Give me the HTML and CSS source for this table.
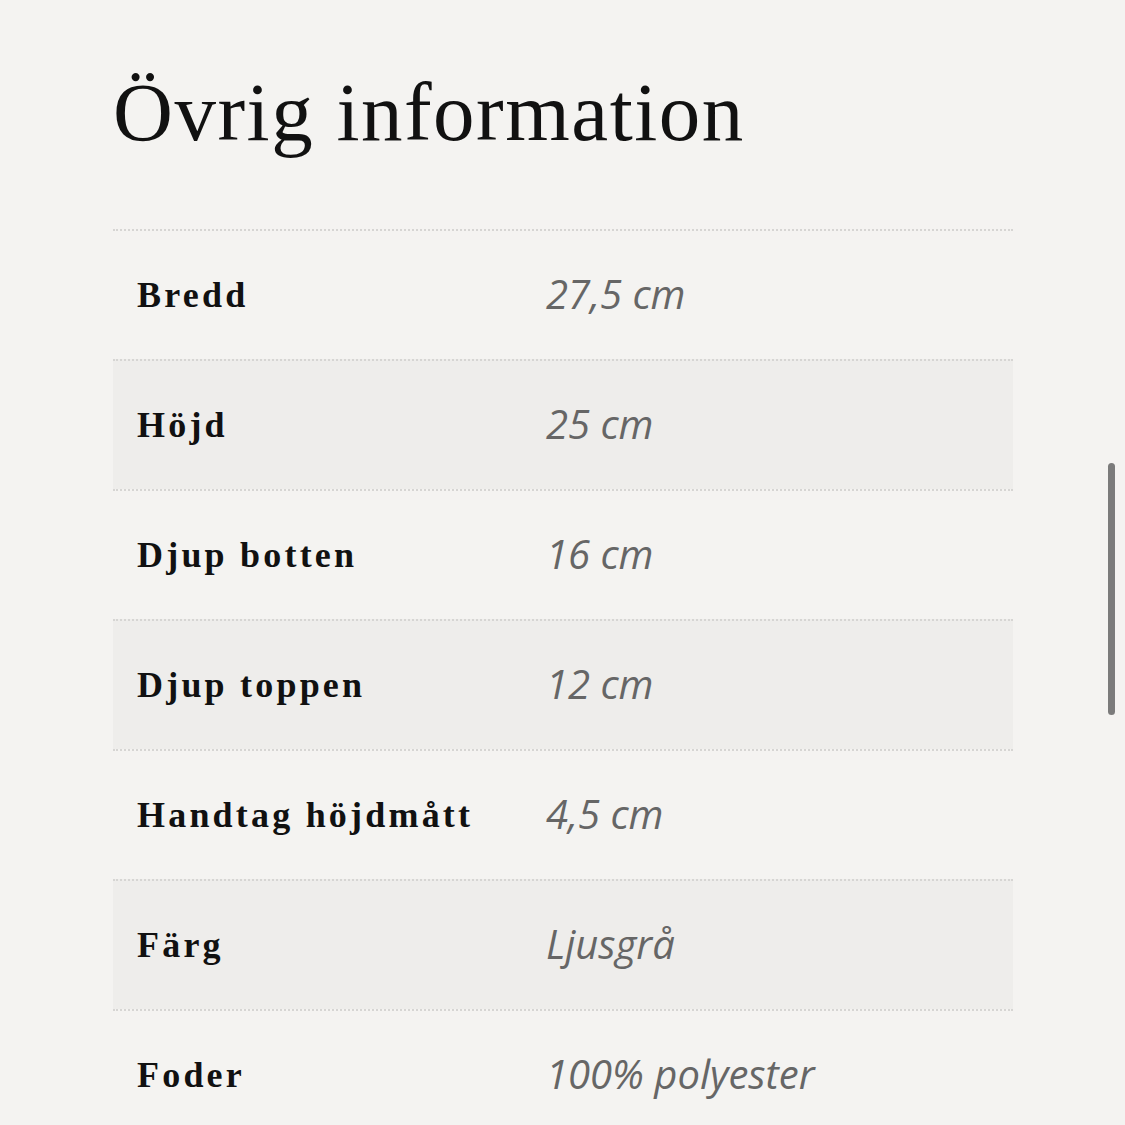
FILE: index.html
```html
<!DOCTYPE html>
<html lang="sv">
<head>
<meta charset="utf-8">
<link rel="stylesheet" href="styles.css">
</head>
<body>
<main class="page">
  <h1 class="title">Övrig information</h1>
  <div class="specs">
    <div class="row"><div class="label">Bredd</div><div class="value">27,5 cm</div></div>
    <div class="row alt"><div class="label">Höjd</div><div class="value">25 cm</div></div>
    <div class="row"><div class="label">Djup botten</div><div class="value">16 cm</div></div>
    <div class="row alt"><div class="label">Djup toppen</div><div class="value">12 cm</div></div>
    <div class="row"><div class="label">Handtag höjdmått</div><div class="value">4,5 cm</div></div>
    <div class="row alt"><div class="label">Färg</div><div class="value">Ljusgrå</div></div>
    <div class="row"><div class="label">Foder</div><div class="value">100% polyester</div></div>
  </div>
</main>
<div class="scrollbar"></div>
</body>
</html>
```
FILE: styles.css
```css
html, body {
  margin: 0;
  padding: 0;
  background: #f4f3f1;
  height: 100%;
  overflow: hidden;
}
.page {
  padding: 0 112px 0 113px;
}
.title {
  margin: 0;
  padding-top: 62px;
  height: 229px;
  box-sizing: border-box;
  font-family: "Liberation Serif", serif;
  font-weight: 400;
  font-size: 83px;
  line-height: 100px;
  letter-spacing: 1.5px;
  color: #111;
}
.specs {
  display: flex;
  flex-direction: column;
}
.row {
  display: grid;
  grid-template-columns: 433px 1fr;
  align-items: center;
  height: 130px;
  flex-shrink: 0;
  box-sizing: border-box;
  border-top: 2px dotted #d6d5d3;
}
.row.alt {
  background: #eeedeb;
}
.label {
  padding-left: 24px;
  font-family: "Liberation Serif", serif;
  font-weight: 700;
  font-size: 36px;
  letter-spacing: 3.2px;
  color: #111;
}
.value {
  font-family: "Open Sans", sans-serif;
  font-style: italic;
  font-size: 40px;
  line-height: 1;
  color: #666;
  padding-bottom: 2px;
}
.scrollbar {
  position: absolute;
  left: 1108px;
  top: 463px;
  width: 7px;
  height: 252px;
  border-radius: 4px;
  background: #7b7b7b;
}
```
